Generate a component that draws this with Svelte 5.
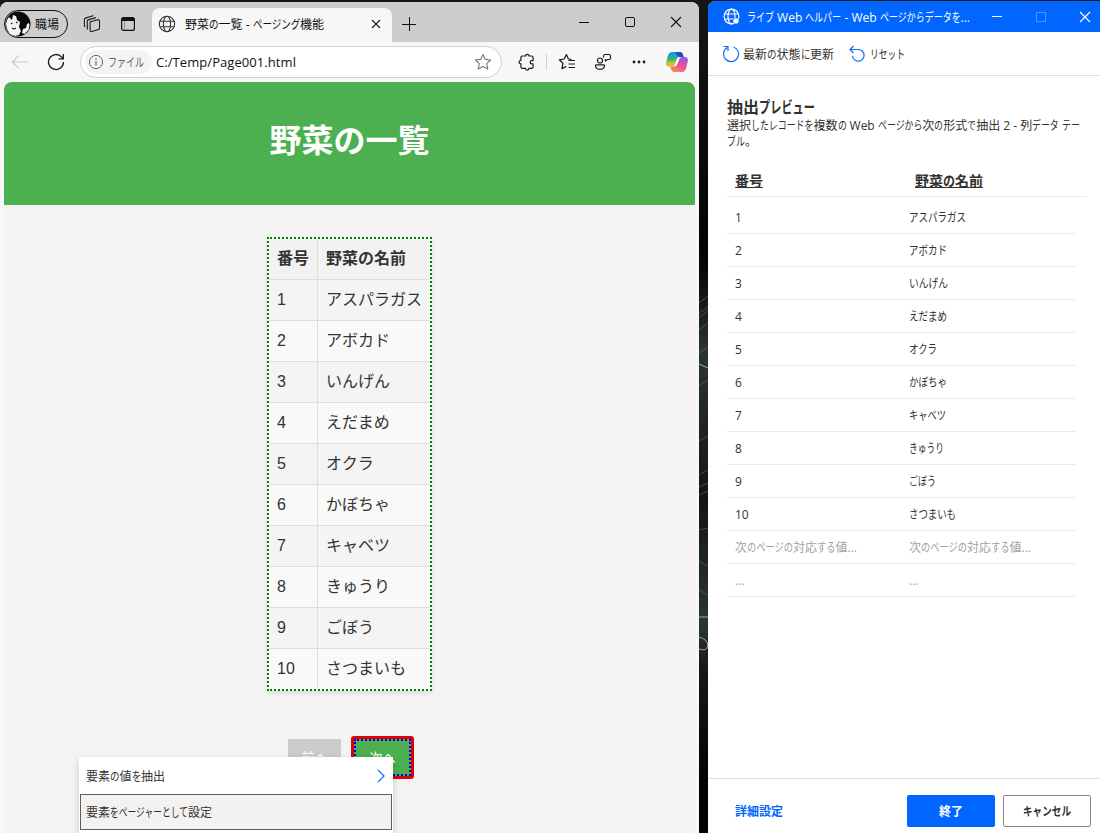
<script>
	const vegetables = [
		{ name: 'アスパラガス', width: 57 },
		{ name: 'アボカド', width: 38 },
		{ name: 'いんげん', width: 39 },
		{ name: 'えだまめ', width: 38 },
		{ name: 'オクラ', width: 28 },
		{ name: 'かぼちゃ', width: 38 },
		{ name: 'キャベツ', width: 37 },
		{ name: 'きゅうり', width: 35 },
		{ name: 'ごぼう', width: 27 },
		{ name: 'さつまいも', width: 47 }
	];

	const previewRows = [
		...vegetables.map((v, i) => ({ id: String(i + 1), name: v.name, width: v.width })),
		{ id: '次のページの対応する値...', idWidth: 122, name: '次のページの対応する値...', width: 122, muted: true },
		{ id: '...', name: '...', muted: true }
	];

	const isKana = (run) => /[\u3040-\u30ff]/.test(run);

	function fit(node, width) {
		if (!width) return;
		const natural = node.getBoundingClientRect().width;
		const kana = [...node.querySelectorAll('.kana')].map((el) => ({ el, w: el.getBoundingClientRect().width }));
		const kanaWidth = kana.reduce((sum, k) => sum + k.w, 0);
		if (!kanaWidth) {
			node.style.letterSpacing = `${(width - natural) / node.textContent.length}px`;
			return;
		}
		const scale = (kanaWidth + width - natural) / kanaWidth;
		for (const { el, w } of kana) {
			el.style.transform = `scaleX(${scale})`;
			el.style.marginRight = `${w * (scale - 1)}px`;
		}
	}
</script>

{#snippet label(text, width)}
	<span class="label" use:fit={width}>{#each text.split(/([\u3040-\u30ff]+)/) as run}<span class:kana={isKana(run)}>{run}</span>{/each}</span>
{/snippet}

<div class="desktop">
	<div class="browser">
		<div class="tab-bar">
			<div class="profile">
				<svg class="avatar" width="26" height="26" viewBox="0 0 26 26">
					<circle cx="13" cy="13" r="12.5" fill="#0a0a0a" />
					<path d="M2 9 4 6l3 3 1-5 3 1 1 4 3 2-1 5 2 4-2 4-4 1-5-2-3-5-1-5z" fill="#f4f4f4" />
					<path d="M17 22l1-4 3-1 1-4 2-1 .5 2-1 5-4 4z" fill="#f4f4f4" />
					<path d="M6 12l1.500 1M11 11l1.500 1M7 17l2 1 2-1" stroke="#222" stroke-width="1.2" fill="none" />
				</svg>
				{@render label('職場', 24)}
			</div>
			<svg class="bar-icon workspaces" width="18" height="18" viewBox="0 0 18 18" fill="none" stroke="#1b1b1b" stroke-width="1.1" stroke-linejoin="round">
				<path d="M7.5 6.8 14.8 4.7q1.7-.3 1.7 1.2v7.3q0 1-1 1.3l-6.7 2q-1.7.2-1.7-1.3V8q0-1 .4-1.2z" />
				<path d="M4.8 14.3 4.3 14V6.2q0-1 1-1.3l7.6-2.3M2.2 12 1.4 11V4.4q0-1 1-1.3L9.2.9q.8-.2 1.2.3" />
			</svg>
			<svg class="bar-icon" width="16" height="16" viewBox="0 0 16 16">
				<rect x="1.6" y="1.6" width="12.8" height="12.8" rx="2" fill="none" stroke="#111" stroke-width="1.2" />
				<path d="M1.5 5V3.5Q1.5 1.2 4 1.2h8q2.5 0 2.5 2.3V5z" fill="#111" />
				<path d="M4.5 5v9" stroke="#777" stroke-width=".7" />
			</svg>
			<div class="tab">
				<svg width="18" height="18" viewBox="0 0 18 18" fill="none" stroke="#333" stroke-width="1.1">
					<circle cx="9" cy="9" r="7.7" />
					<ellipse cx="9" cy="9" rx="3.6" ry="7.7" />
					<path d="M2 6.3h14M2 11.7h14" />
				</svg>
				<span class="tab-title">{@render label('野菜の一覧 - ページング機能', 139)}</span>
				<svg class="tab-close" width="10" height="10" viewBox="0 0 10 10" stroke="#222" stroke-width="1.1">
					<path d="M1 1l8 8M9 1l-8 8" />
				</svg>
			</div>
			<svg class="new-tab" width="14" height="14" viewBox="0 0 14 14" stroke="#111" stroke-width="1">
				<path d="M7.5 0v14M0 7.5h14" />
			</svg>
			<div class="window-buttons">
				<svg width="12" height="12" viewBox="0 0 12 12" stroke="#111"><path d="M1 6.5h10" /></svg>
				<svg width="12" height="12" viewBox="0 0 12 12" fill="none" stroke="#111"><rect x="1.5" y="1.5" width="9" height="9" rx="1.5" /></svg>
				<svg width="12" height="12" viewBox="0 0 12 12" stroke="#111" stroke-width="1.1"><path d="M1 1l10 10M11 1 1 11" /></svg>
			</div>
		</div>

		<div class="toolbar">
			<svg class="back" width="18" height="16" viewBox="0 0 18 16" fill="none" stroke="#c8c8c8" stroke-width="1.1">
				<path d="M17 8H1.5M8 1.3 1.3 8 8 14.7" />
			</svg>
			<svg class="reload" width="18" height="18" viewBox="0 0 18 18" fill="none" stroke="#1b1b1b" stroke-width="1.3">
				<path d="M16.500 9A7.500 7.500 0 1 1 14.500 3.900L16 5.500M16.300 1v4.800h-4.800" />
			</svg>
			<div class="address">
				<div class="scheme">
					<svg width="16" height="16" viewBox="0 0 16 16" fill="none" stroke="#666">
						<circle cx="8" cy="8" r="6.6" />
						<path d="M8 7v4.5M8 4.3v1.4" stroke-width="1.2" />
					</svg>
					{@render label('ファイル', 36)}
				</div>
				<span class="url">{@render label('C:/Temp/Page001.html', 140)}</span>
				<svg class="star" width="18" height="18" viewBox="0 0 18 18" fill="none" stroke="#767676" stroke-width="1.1" stroke-linejoin="round">
					<path d="M9 1.5 11.3 6.4 16.6 7 12.7 10.7 13.8 16 9 13.4 4.2 16 5.3 10.7 1.4 7 6.7 6.4z" />
				</svg>
			</div>
			<svg class="ext" width="18" height="18" viewBox="0 0 18 18" fill="none" stroke="#1b1b1b" stroke-width="1.2" stroke-linejoin="round">
				<path d="M4.5 3h3.2C7.3.7 11.3.7 10.8 3h2.7q1.6 0 1.6 1.6v3h-1.4c-2 0-2 3.2 0 3.2h1.4v3q0 1.6-1.6 1.6h-2.7c.5 2.2-3.5 2.2-3.1 0H4.5q-1.6 0-1.6-1.6v-3.1c-2.4.4-2.4-3.6 0-3.2V4.6Q2.9 3 4.5 3z" />
			</svg>
			<span class="divider"></span>
			<svg class="fav" width="18" height="18" viewBox="0 0 18 18" fill="none" stroke="#1b1b1b" stroke-width="1.2" stroke-linejoin="round">
				<path d="M13.5 6.3 10.4 6 8.4 1.5 6.2 6 1.3 6.8 4.9 10.3 4 15.7 8.2 13.4M10.5 7.5H17M10.5 11H17M10.5 14.5H17" />
			</svg>
			<svg class="share" width="18" height="18" viewBox="0 0 18 18" fill="none" stroke="#1b1b1b" stroke-width="1.2" stroke-linejoin="round">
				<circle cx="6" cy="7.5" r="2.5" />
				<path d="M2.5 11.8h7q1.3 0 1 1.3-.8 3.3-4.5 3.3t-4.5-3.3q-.3-1.3 1-1.3zM9.5 4.5V3q0-1.500 1.500-1.500h4q1.500 0 1.500 1.500v2q0 1.500-1.500 1.500h-1.500L11.300 8V6.300" />
			</svg>
			<svg class="more" width="14" height="4" viewBox="0 0 14 4" fill="#1b1b1b">
				<circle cx="2" cy="2" r="1.4" /><circle cx="7" cy="2" r="1.4" /><circle cx="12" cy="2" r="1.4" />
			</svg>
			<svg class="copilot" width="24" height="22" viewBox="0 0 24 22">
				<defs>
					<linearGradient id="cp-left" x1="0" y1="0" x2="0" y2="1">
						<stop offset="0" stop-color="#1595ef" />
						<stop offset=".5" stop-color="#35b47e" />
						<stop offset=".8" stop-color="#d6c61a" />
						<stop offset="1" stop-color="#f8a91b" />
					</linearGradient>
					<linearGradient id="cp-right" x1=".7" y1="0" x2=".2" y2="1">
						<stop offset="0" stop-color="#9a58e6" />
						<stop offset=".5" stop-color="#eb4f91" />
						<stop offset="1" stop-color="#ff8a4c" />
					</linearGradient>
				</defs>
				<path d="M7 1h8q2 0 2.700 2l1 3h-4q-2 0-2.600 2L10 13q-.8 2.500-3.200 2.500H4Q.4 15.500 1.200 11L3 4.500Q4 1 7 1z" fill="url(#cp-left)" />
				<path d="M10 1h5q2 0 2.700 2l1 3h-4q-2 0-2.700-1.800z" fill="#174fc9" />
				<path d="M17 21H9q-2 0-2.700-2l-1-3.500h4q2 0 2.600-2L14 8.500Q14.800 6 17.200 6H20q3.600 0 2.800 4.500L21 17.500Q20 21 17 21z" fill="url(#cp-right)" />
				<path d="M11.800 8q.6-1.500 2.600-1.700L12.800 12q-1 3-3.600 3.200 1-.5 1.400-2z" fill="#fff" />
			</svg>
		</div>

		<div class="page">
			<header>野菜の一覧</header>
			<div class="veg-table">
				<div class="veg-row head">
					<span>番号</span>
					<span>野菜の名前</span>
				</div>
				{#each vegetables as veg, i}
					<div class="veg-row" class:even={i % 2 === 1}>
						<span>{i + 1}</span>
						<span>{veg.name}</span>
					</div>
				{/each}
			</div>
			<div class="pager">
				<button type="button" class="prev">前へ</button>
				<div class="selected"><button type="button" class="next">次へ</button></div>
			</div>
		</div>

		<div class="context-menu">
			<div class="menu-item">
				{@render label('要素の値を抽出', 79)}
				<svg width="8" height="14" viewBox="0 0 8 14" fill="none" stroke="#0f6cff" stroke-width="1.2"><path d="M1 1l6 6-6 6" /></svg>
			</div>
			<div class="menu-item active">{@render label('要素をページャーとして設定', 126)}</div>
		</div>
	</div>

	<div class="wallpaper">
		<svg width="9" height="833" viewBox="0 0 9 833" fill="none" stroke="#73898b" stroke-width=".8">
			<path d="M0 303l9-7M0 313l9-6M0 318l9-8M0 330l9-7M0 353l9-6M0 386l9-6M0 441l9-5M0 475l9-5M0 487l9-4M0 495l9-4M0 530l9-2M0 561l9 5M0 590l9 5" opacity=".55" />
			<path d="M0 364l9 4M0 617h9M0 637q8 2 9 8-1 7-9 4" stroke="#b6cccd" />
		</svg>
	</div>

	<div class="helper">
		<div class="helper-title">
			<svg class="helper-logo" width="18" height="18" viewBox="0 0 18 18" fill="none" stroke="#fff" stroke-width="1.2">
				<circle cx="8.5" cy="8.5" r="7.4" />
				<ellipse cx="8.5" cy="8.5" rx="3.5" ry="7.4" />
				<path d="M1.5 6h14M1.5 11h14" />
				<circle cx="13" cy="13" r="3" fill="#fff" stroke="#06f" stroke-width=".6" />
			</svg>
			<span class="helper-name">{@render label('ライブ Web ヘルパー - Web ページからデータを...', 223)}</span>
			<div class="helper-buttons">
				<svg width="12" height="12" viewBox="0 0 12 12" stroke="#fff"><path d="M1 5.5h10" /></svg>
				<svg width="12" height="12" viewBox="0 0 12 12" fill="none" stroke="#4c94ff"><rect x="1.5" y="1.5" width="9" height="9" /></svg>
				<svg width="12" height="12" viewBox="0 0 12 12" stroke="#fff" stroke-width="1.2"><path d="M1 1l10 10M11 1 1 11" /></svg>
			</div>
		</div>
		<div class="helper-actions">
			<svg width="18" height="18" viewBox="0 0 18 18" fill="none" stroke="#0f6cff" stroke-width="1.2">
				<path d="M11.5 2A7.5 7.5 0 1 1 5.3 2.6M1.5 1.5h4.5V6" />
			</svg>
			<span class="refresh">{@render label('最新の状態に更新', 91)}</span>
			<svg width="18" height="18" viewBox="0 0 18 18" fill="none" stroke="#0f6cff" stroke-width="1.2">
				<path d="M4.5 1 1 4.500 4.500 8M1 4.500H9.500A5.800 5.800 0 1 1 3.500 10.700" />
			</svg>
			<span class="reset">{@render label('リセット', 35)}</span>
		</div>
		<div class="preview">
			<h2>{@render label('抽出プレビュー', 88)}</h2>
			<p>
				{@render label('選択したレコードを複数の Web ページから次の形式で抽出 2 - 列データ テー', 353)}<br />
				{@render label('ブル。', 30)}
			</p>
			<div class="preview-head">
				<span>番号</span>
				<span>{@render label('野菜の名前', 68)}</span>
			</div>
			{#each previewRows as row}
				<div class="preview-row" class:muted={row.muted}>
					<span>{@render label(row.id, row.idWidth)}</span>
					<span>{@render label(row.name, row.width)}</span>
				</div>
			{/each}
		</div>
		<div class="helper-footer">
			<a href="#advanced">{@render label('詳細設定', 48)}</a>
			<button type="button" class="primary">{@render label('終了', 24)}</button>
			<button type="button" class="secondary">{@render label('キャンセル', 48)}</button>
		</div>
	</div>
</div>

<style>
	:global(body) {
		margin: 0;
		overflow: hidden;
	}

	.desktop {
		display: flex;
		width: 1100px;
		height: 833px;
		background: #15191a;
		font-family: 'Open Sans', 'Noto Sans CJK JP', sans-serif;
		font-size: 12px;
		color: #323130;
		overflow: hidden;
	}

	.label {
		display: inline-block;
		white-space: pre;
	}

	.kana {
		display: inline-block;
		transform-origin: left;
	}

	svg {
		flex: none;
		display: block;
	}

	button {
		font: inherit;
		padding: 0;
		box-sizing: border-box;
	}

	.browser {
		position: relative;
		width: 699px;
		height: 831px;
		margin-top: 2px;
		display: flex;
		flex-direction: column;
		background: #f7f7f7;
		border-radius: 8px 8px 0 0;
		overflow: hidden;
	}

	.tab-bar {
		display: flex;
		align-items: center;
		height: 40px;
		flex: none;
		background: #cdcdcd;
		padding-left: 4px;
		box-sizing: border-box;
	}

	.profile {
		display: flex;
		align-items: center;
		gap: 4px;
		width: 64px;
		height: 28px;
		margin-top: 4px;
		border: 1px solid #111;
		border-radius: 14px;
		box-sizing: border-box;
		color: #111;
	}

	.bar-icon {
		margin: 4px 0 0 19px;
	}

	.workspaces {
		margin: 3px 0 0 15px;
	}

	.tab {
		display: flex;
		align-items: center;
		align-self: flex-end;
		width: 240px;
		height: 34px;
		margin-left: 16px;
		padding: 0 11px 2px 6px;
		background: #f7f7f7;
		border-radius: 8px 8px 0 0;
		box-sizing: border-box;
		color: #111;
	}

	.tab-title {
		flex: 1;
		margin-left: 9px;
	}

	.new-tab {
		margin: 3px 0 0 10px;
	}

	.window-buttons {
		display: flex;
		gap: 34px;
		margin: 0 17px 0 auto;
	}

	.toolbar {
		display: flex;
		align-items: center;
		height: 40px;
		flex: none;
	}

	.back {
		margin-left: 11px;
	}

	.reload {
		margin-left: 18px;
	}

	.address {
		display: flex;
		align-items: center;
		width: 422px;
		height: 32px;
		margin-left: 15px;
		padding: 0 9px 0 4px;
		background: #fff;
		border: 1px solid #d0d0d0;
		border-radius: 16px;
		box-sizing: border-box;
	}

	.scheme {
		display: flex;
		align-items: center;
		gap: 4px;
		width: 67px;
		height: 24px;
		padding-left: 3px;
		background: #f3f3f3;
		border-radius: 12px;
		box-sizing: border-box;
		color: #606060;
	}

	.url {
		flex: 1;
		margin-left: 4px;
		font-size: 13px;
		color: #111;
	}

	.ext {
		margin-left: 16px;
	}

	.divider {
		width: 1px;
		height: 16px;
		margin-left: 10px;
		background: #cfcfcf;
	}

	.fav {
		margin-left: 11px;
	}

	.share {
		margin-left: 18px;
	}

	.more {
		margin-left: 20px;
	}

	.copilot {
		margin-left: 19px;
	}

	.page {
		flex: 1;
		display: flex;
		flex-direction: column;
		align-items: center;
		width: 691px;
		margin-left: 4px;
		background: #f4f4f4;
		border-radius: 8px 8px 0 0;
		overflow: hidden;
		font-family: 'Liberation Sans', 'Noto Sans CJK JP', sans-serif;
		font-size: 16px;
		color: #333;
	}

	header {
		width: 100%;
		height: 123px;
		flex: none;
		background: #4caf50;
		color: #fff;
		font-size: 32px;
		font-weight: bold;
		line-height: 118px;
		text-align: center;
	}

	.veg-table {
		width: 161px;
		margin-top: 32px;
		border: 2px dotted green;
		box-shadow: 0 2px 5px rgba(0, 0, 0, 0.1);
	}

	.veg-row {
		display: grid;
		grid-template-columns: 49px 112px;
		height: 40px;
		line-height: 40px;
		border-bottom: 1px solid #ddd;
		background: #f4f4f4;
		white-space: nowrap;
	}

	.veg-row span {
		padding-left: 8px;
	}

	.veg-row span:first-child {
		border-right: 1px solid #ddd;
	}

	.veg-row.head {
		background: #f2f2f2;
		font-weight: bold;
	}

	.veg-row.even {
		background: #f9f9f9;
	}

	.veg-row:last-child {
		border-bottom: 0;
	}

	.pager {
		display: flex;
		gap: 10px;
		margin: 45px 0 0 3px;
	}

	.prev {
		width: 53px;
		height: 37px;
		margin-top: 3px;
		border: 0;
		background: #ccc;
		color: #fff;
		font-size: 13.3px;
	}

	.selected {
		padding: 3px;
		background: #e00000;
		border-radius: 3px;
	}

	.next {
		display: block;
		width: 57px;
		height: 37px;
		border: 2px dotted #00f;
		background: #4caf50;
		color: #fff;
		font-size: 13.3px;
	}

	.context-menu {
		position: absolute;
		left: 79px;
		top: 755px;
		width: 314px;
		height: 90px;
		padding: 0 1px;
		box-sizing: border-box;
		background: #fff;
		box-shadow: 0 3px 8px rgba(0, 0, 0, 0.18);
	}

	.menu-item {
		display: flex;
		align-items: center;
		justify-content: space-between;
		height: 37px;
		padding: 0 7px 0 6px;
		box-sizing: border-box;
	}

	.menu-item.active {
		height: 36px;
		padding-left: 5px;
		border: 1px solid #605e5c;
		background: #f3f2f1;
	}

	.wallpaper {
		width: 9px;
		background: linear-gradient(#141718, #020303 30%, #080b0b 33%, #2c3435 42%, #111617 60%, #2c3536 75%, #151919 80%, #020303 94%);
	}

	.helper {
		width: 392px;
		height: 832px;
		margin-top: 1px;
		display: flex;
		flex-direction: column;
		background: #fff;
		border-radius: 8px 0 0 0;
		overflow: hidden;
	}

	.helper-title {
		display: flex;
		align-items: center;
		height: 31px;
		flex: none;
		padding: 0 9px 0 15px;
		background: #06f;
		color: #fff;
	}

	.helper-name {
		flex: 1;
		margin-left: 6px;
	}

	.helper-buttons {
		display: flex;
		gap: 32px;
	}

	.helper-actions {
		display: flex;
		align-items: center;
		height: 43px;
		flex: none;
		padding-left: 14px;
		border-bottom: 1px solid #e1dfdd;
	}

	.refresh {
		margin: 0 15px 0 3px;
	}

	.reset {
		margin-left: 3px;
	}

	.preview {
		flex: 1;
		padding: 21px 13px 0 19px;
	}

	h2 {
		margin: 0;
		font-size: 16px;
		font-weight: 600;
		line-height: 21px;
	}

	p {
		margin: 0;
		line-height: 16px;
	}

	.preview-head {
		display: grid;
		grid-template-columns: 180px 1fr;
		height: 47px;
		padding-left: 8px;
		border-bottom: 1px solid #edebe9;
		box-sizing: border-box;
		font-size: 14px;
		font-weight: 600;
		line-height: 61px;
		text-decoration: underline;
	}

	.preview-head .label,
	.preview-head .kana {
		text-decoration: underline;
	}

	.preview-row {
		display: grid;
		grid-template-columns: 174px 1fr;
		width: 349px;
		height: 33px;
		padding-left: 8px;
		border-bottom: 1px solid #edebe9;
		box-sizing: border-box;
		line-height: 33px;
	}

	.preview-head + .preview-row {
		height: 37px;
		padding-top: 4px;
	}

	.muted {
		color: #a19f9d;
	}

	.helper-footer {
		display: flex;
		align-items: center;
		height: 55px;
		flex: none;
		padding: 10px 9px 0 27px;
		box-sizing: border-box;
		border-top: 1px solid #e1dfdd;
	}

	.helper-footer a {
		flex: 1;
		color: #06f;
		font-weight: 600;
		text-decoration: none;
	}

	.helper-footer button {
		width: 88px;
		height: 32px;
		border-radius: 2px;
		font-weight: 600;
	}

	.primary {
		background: #06f;
		color: #fff;
		border: 0;
	}

	.secondary {
		margin-left: 8px;
		background: #fff;
		color: #323130;
		border: 1px solid #8a8886;
	}
</style>
